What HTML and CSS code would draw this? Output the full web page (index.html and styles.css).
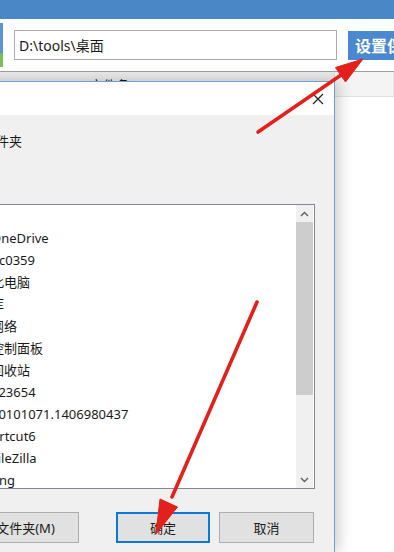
FILE: index.html
```html
<!DOCTYPE html>
<html lang="zh-CN">
  <head>
    <meta charset="UTF-8" />
    <meta name="viewport" content="width=device-width,initial-scale=1.0" />
    <title>设置保存路径</title>
    <link rel="stylesheet" href="styles.css">
  </head>
  <body>
    <div class="app">
      <div class="titlebar"></div>
      <div class="toolbar">
        <span class="app-icon"></span>
        <input class="path-input" type="text" value="D:\tools\桌面" />
        <button type="button" class="save-btn">设置保存</button>
      </div>
      <div class="list-head">
        <span class="col-name">文件名</span>
        <span class="col-rest"></span>
      </div>
      <div class="list-body"></div>
    </div>

    <div class="dialog">
      <div class="dialog-title">
        <svg class="close-icon" width="12" height="12" viewBox="0 0 12 12">
          <path d="M1 1 L11 11 M11 1 L1 11" stroke="#222" stroke-width="1.2" fill="none" />
        </svg>
      </div>
      <div class="dialog-body">
        <p class="dialog-desc">选择文件夹</p>
        <div class="tree">
          <ul class="tree-list">
            <li class="tree-root">桌面</li>
            <li>OneDrive</li>
            <li>pc0359</li>
            <li>此电脑</li>
            <li>库</li>
            <li>网络</li>
            <li>控制面板</li>
            <li>回收站</li>
            <li>123654</li>
            <li>20101071.1406980437</li>
            <li>Artcut6</li>
            <li>FileZilla</li>
            <li>png</li>
          </ul>
          <div class="scrollbar">
            <span class="scroll-arrow">
              <svg width="9" height="6" viewBox="0 0 9 6"><path d="M1 5 L4.5 1.5 L8 5" stroke="#606060" stroke-width="1.4" fill="none" /></svg>
            </span>
            <span class="scroll-thumb"></span>
            <span class="scroll-track"></span>
            <span class="scroll-arrow">
              <svg width="9" height="6" viewBox="0 0 9 6"><path d="M1 1 L4.5 4.5 L8 1" stroke="#606060" stroke-width="1.4" fill="none" /></svg>
            </span>
          </div>
        </div>
        <div class="dialog-buttons">
          <button type="button" class="win-btn new-folder">新建文件夹(M)</button>
          <button type="button" class="win-btn ok-btn">确定</button>
          <button type="button" class="win-btn cancel-btn">取消</button>
        </div>
      </div>
    </div>

    <svg class="arrows" width="394" height="552" viewBox="0 0 394 552">
      <g fill="#e3201b" stroke="#e3201b">
        <line x1="258" y1="132" x2="344" y2="73" stroke-width="3.6" stroke-linecap="round" />
        <polygon points="363,59 345.5,82 335.5,67.5" stroke-width="1" />
        <line x1="257" y1="302" x2="172" y2="497" stroke-width="3.6" stroke-linecap="round" />
        <polygon points="156,534 160,499 177.5,507" stroke-width="1" />
      </g>
    </svg>
  </body>
</html>
```

FILE: styles.css
```css
* {
  margin: 0;
  padding: 0;
  box-sizing: border-box;
}
html, body {
  width: 394px;
  height: 552px;
  overflow: hidden;
  font-family: "Noto Sans", "Noto Sans CJK SC", sans-serif;
  color: #1a1a1a;
  background: #fff;
}
body {
  position: relative;
}
.app {
  display: flex;
  flex-direction: column;
  height: 552px;
  overflow: hidden;
}
.titlebar {
  height: 19px;
  flex-shrink: 0;
  background: #4a87c7;
}
.toolbar {
  height: 52px;
  flex-shrink: 0;
  display: flex;
  align-items: center;
  background: #fff;
  overflow: hidden;
}
.toolbar > * {
  flex-shrink: 0;
}
.app-icon {
  width: 3px;
  height: 44px;
  margin-right: 11px;
  background: linear-gradient(#5b95d4 0%, #5b95d4 68%, #7cbf5a 70%, #7cbf5a 100%);
}
.path-input {
  width: 323px;
  height: 30px;
  border: 1px solid #ababab;
  padding: 0 4px;
  font-family: "Noto Sans", "Noto Sans CJK SC", sans-serif;
  font-size: 14px;
  color: #1a1a1a;
  background: #fff;
}
.save-btn {
  margin-left: 11px;
  height: 29px;
  padding: 0 7px;
  border: none;
  background: #4a89cf;
  color: #fff;
  font-family: "Noto Sans CJK SC", sans-serif;
  font-size: 16px;
  font-weight: 700;
  white-space: nowrap;
}
.list-head {
  height: 26px;
  flex-shrink: 0;
  display: flex;
  border-top: 1px solid #9f9f9f;
  border-bottom: 1px solid #e2e2e2;
  background: #f4f4f4;
}
.col-name {
  width: 335px;
  padding: 3px 0 0 90px;
  font-size: 13px;
  background: #ebebeb;
  border-right: 1px solid #dcdcdc;
}
.col-rest {
  flex: 1;
  border-right: 1px solid #e2e2e2;
}
.list-body {
  flex: 1;
  background: #fff;
}

/* folder browser dialog */
.dialog {
  position: absolute;
  top: 81px;
  left: -100px;
  width: 435px;
  height: 471px;
  border: 1px solid #6f9dd6;
  border-bottom: none;
  background: #f0f0f0;
  box-shadow: 3px 0 14px rgba(0, 0, 0, 0.22);
  overflow: hidden;
}
.dialog-title {
  height: 33px;
  background: #fff;
  display: flex;
  justify-content: flex-end;
  align-items: center;
  padding-right: 10px;
}
.close-icon {
  display: block;
}
.dialog-body {
  padding: 0 19px 0 12px;
  display: flex;
  flex-direction: column;
}
.dialog-desc {
  margin: 16px 0 0 44px;
  font-size: 13px;
  line-height: 20px;
}
.tree {
  margin-top: 53px;
  height: 285px;
  border: 1px solid #828790;
  background: #fff;
  display: flex;
}
.tree-list {
  flex: 1;
  list-style: none;
  overflow: hidden;
}
.tree-list li {
  height: 22px;
  line-height: 22px;
  padding-left: 77px;
  font-size: 13px;
  white-space: nowrap;
}
.tree-list .tree-root {
  padding-left: 40px;
}
.scrollbar {
  width: 17px;
  margin-right: 1px;
  display: flex;
  flex-direction: column;
  background: #f0f0f0;
}
.scroll-arrow {
  height: 17px;
  display: flex;
  align-items: center;
  justify-content: center;
}
.scroll-thumb {
  height: 173px;
  background: #cdcdcd;
}
.scroll-track {
  flex: 1;
}
.dialog-buttons {
  margin-top: 23px;
  display: flex;
  padding-right: 1px;
}
.win-btn {
  height: 31px;
  border: 1px solid #adadad;
  background: #e1e1e1;
  font-family: "Noto Sans", "Noto Sans CJK SC", sans-serif;
  font-size: 13px;
  color: #1a1a1a;
}
.new-folder {
  width: 133px;
  margin-left: 33px;
  margin-right: auto;
}
.ok-btn {
  width: 94px;
  border: 2px solid #0a78d6;
}
.cancel-btn {
  width: 95px;
  margin-left: 9px;
}

.arrows {
  position: absolute;
  top: 0;
  left: 0;
  pointer-events: none;
}
```
